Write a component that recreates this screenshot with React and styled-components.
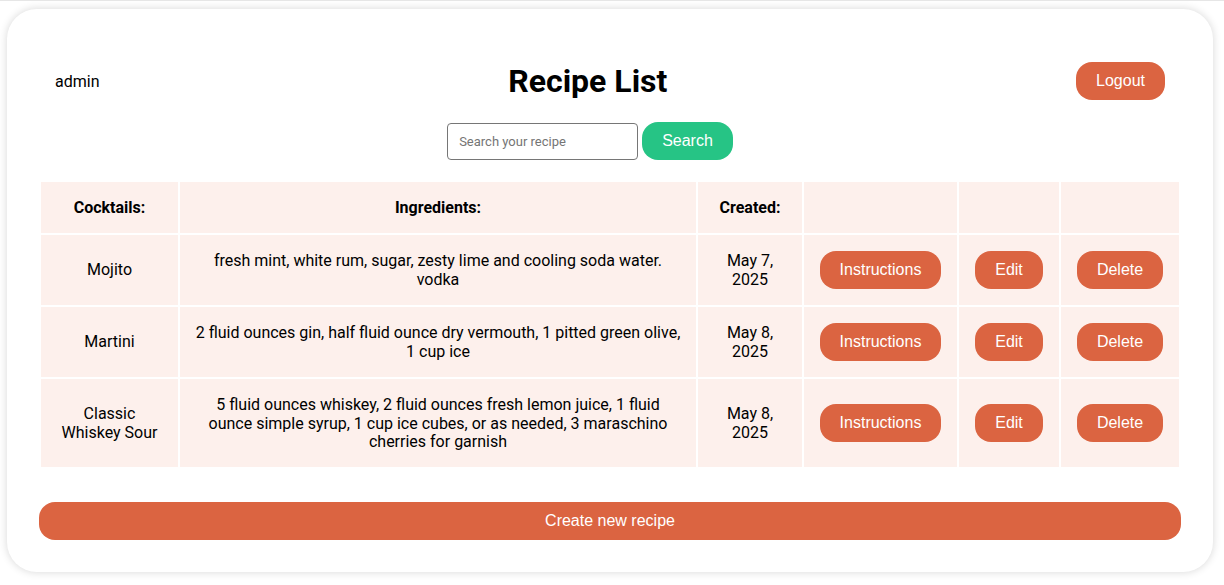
import React, { useState } from "react";
import styled, { createGlobalStyle } from "styled-components";

const recipes = [
  {
    id: 1,
    name: "Mojito",
    ingredients: "fresh mint, white rum, sugar, zesty lime and cooling soda water. vodka",
    created: "May 7, 2025",
  },
  {
    id: 2,
    name: "Martini",
    ingredients:
      "2 fluid ounces gin, half fluid ounce dry vermouth, 1 pitted green olive, 1 cup ice",
    created: "May 8, 2025",
  },
  {
    id: 3,
    name: "Classic Whiskey Sour",
    ingredients:
      "5 fluid ounces whiskey, 2 fluid ounces fresh lemon juice, 1 fluid ounce simple syrup, 1 cup ice cubes, or as needed, 3 maraschino cherries for garnish",
    created: "May 8, 2025",
  },
];

const columnWidths = [137, 516, 104, 153, 100, 118];

const RecipeList = () => {
  const [query, setQuery] = useState("");

  return (
    <>
      <GlobalStyle />
      <Page>
        <Card>
          <Header>
            <UserName>admin</UserName>
            <Title>Recipe List</Title>
            <PillButton>Logout</PillButton>
          </Header>

          <SearchRow>
            <SearchInput
              placeholder="Search your recipe"
              value={query}
              onChange={(e) => setQuery(e.target.value)}
            />
            <PillButton $green>Search</PillButton>
          </SearchRow>

          <Table>
            <colgroup>
              {columnWidths.map((w, i) => (
                <col key={i} style={{ width: w }} />
              ))}
            </colgroup>
            <thead>
              <tr>
                <HeadCell>Cocktails:</HeadCell>
                <HeadCell>Ingredients:</HeadCell>
                <HeadCell>Created:</HeadCell>
                <HeadCell />
                <HeadCell />
                <HeadCell />
              </tr>
            </thead>
            <tbody>
              {recipes.map((recipe) => (
                <tr key={recipe.id}>
                  <Cell>{recipe.name}</Cell>
                  <Cell>{recipe.ingredients}</Cell>
                  <Cell>{recipe.created}</Cell>
                  <Cell $action>
                    <PillButton>Instructions</PillButton>
                  </Cell>
                  <Cell $action>
                    <PillButton>Edit</PillButton>
                  </Cell>
                  <Cell $action>
                    <PillButton>Delete</PillButton>
                  </Cell>
                </tr>
              ))}
            </tbody>
          </Table>

          <CreateButton>Create new recipe</CreateButton>
        </Card>
      </Page>
    </>
  );
};

const GlobalStyle = createGlobalStyle`
  body {
    margin: 0;
    background: #fff;
    font-family: Roboto, "Liberation Sans", sans-serif;
    color: #000;
    border-top: 1px solid #e6e6e6;
  }
`;

const Page = styled.div`
  padding: 8px 11px 13px 7px;
`;

const Card = styled.div`
  background: #fff;
  border-radius: 30px;
  box-shadow: 0 0 9px rgba(0, 0, 0, 0.16);
  padding: 32px;
  display: flex;
  flex-direction: column;
`;

const Header = styled.div`
  display: flex;
  align-items: center;
  justify-content: space-between;
  padding: 21px 16px 0;
`;

const UserName = styled.span`
  font-size: 16px;
`;

const Title = styled.h1`
  margin: 0;
  font-size: 32px;
  font-weight: 700;
  line-height: 38px;
`;

const PillButton = styled.button`
  font-family: "Liberation Sans", Arial, sans-serif;
  font-size: 16px;
  line-height: 18px;
  color: #fff;
  background: ${(p) => (p.$green ? "#26c485" : "#db6441")};
  border: none;
  border-radius: 16px;
  padding: 10px 20px;
  cursor: pointer;
`;

const SearchRow = styled.div`
  display: flex;
  justify-content: center;
  align-items: center;
  gap: 4px;
  margin-top: 22px;
  padding-right: 40px;
`;

const SearchInput = styled.input`
  box-sizing: border-box;
  width: 191px;
  height: 37px;
  padding: 0 11px;
  border: 1px solid #767676;
  border-radius: 4px;
  font-family: Roboto, sans-serif;
  font-size: 13px;

  &::placeholder {
    color: #757575;
  }
`;

const Table = styled.table`
  table-layout: fixed;
  width: 100%;
  border-spacing: 2px;
  margin-top: 20px;
`;

const HeadCell = styled.th`
  background: #fdf0ec;
  padding: 17px 14px 15px;
  font-size: 16px;
  font-weight: 700;
  text-align: center;
  line-height: 18.75px;
`;

const Cell = styled.td`
  background: #fdf0ec;
  padding: ${(p) => (p.$action ? "16px 14px" : "17px 14px 15px")};
  font-size: 16px;
  text-align: center;
  line-height: 18.75px;
`;

const CreateButton = styled.button`
  margin-top: 33px;
  width: 100%;
  height: 38px;
  font-family: "Liberation Sans", Arial, sans-serif;
  font-size: 16px;
  color: #fff;
  background: #db6441;
  border: none;
  border-radius: 16px;
  cursor: pointer;
`;

export default RecipeList;
